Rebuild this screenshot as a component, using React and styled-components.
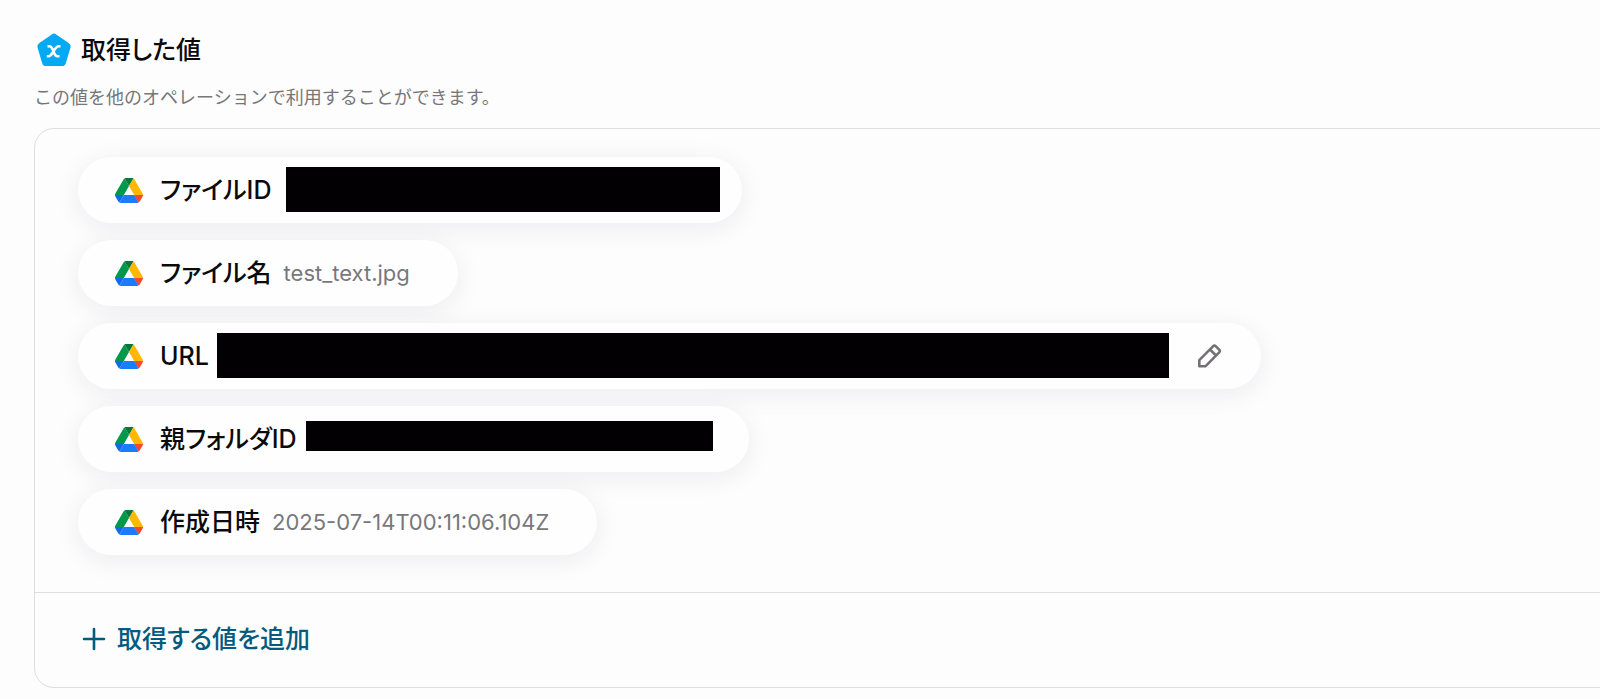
import React from "react";
import styled, { createGlobalStyle } from "styled-components";

const GlobalStyle = createGlobalStyle`
  * { box-sizing: border-box; }
  body {
    margin: 0;
    background: #fdfdfd;
    color: #0b0b0e;
    font-family: Inter, "Noto Sans CJK JP", sans-serif;
    font-feature-settings: "palt";
    overflow-x: hidden;
  }
`;

const Page = styled.main`
  padding: 32px 0 12px 34px;
`;

const Header = styled.header`
  display: flex;
  align-items: center;
  gap: 9px;
  padding-left: 2px;
`;

const Title = styled.h1`
  margin: 0;
  font-size: 25px;
  line-height: 36px;
  font-weight: 500;
`;

const Description = styled.p`
  margin: 16px 0;
  font-size: 18px;
  line-height: 28px;
  font-feature-settings: normal;
  color: #76767a;
`;

const Panel = styled.section`
  margin-right: -24px;
  border: 1px solid #dedde0;
  border-radius: 20px;
`;

const ValueList = styled.ul`
  display: flex;
  flex-direction: column;
  align-items: flex-start;
  gap: 17px;
  margin: 0;
  padding: 28px 43px 37px;
  list-style: none;
`;

const ValuePill = styled.li`
  display: flex;
  align-items: center;
  height: 66px;
  padding: 0 ${(p) => p.$end}px 0 37px;
  border-radius: 33px;
  background: #fefefe;
  box-shadow: 0 5px 26px rgba(50, 30, 60, 0.08);
`;

const Label = styled.span`
  margin-left: 17px;
  font-size: 25px;
  line-height: 36px;
  font-weight: 500;
  white-space: nowrap;
`;

const Value = styled.span`
  margin-left: 12px;
  font-size: 22px;
  line-height: 36px;
  color: #78787c;
  white-space: nowrap;
`;

const Redacted = styled.span`
  width: ${(p) => p.$width}px;
  height: ${(p) => p.$height}px;
  margin: 0 0 ${(p) => p.$below}px ${(p) => p.$gap}px;
  background: #020003;
`;

const EditButton = styled.button`
  display: flex;
  margin: 0 0 0 26px;
  padding: 0;
  border: 0;
  background: none;
  color: #747276;
  cursor: pointer;
`;

const Footer = styled.footer`
  border-top: 1px solid #dedde0;
  padding: 28px 46px 30px;
`;

const AddButton = styled.button`
  display: flex;
  align-items: center;
  gap: 10px;
  padding: 0;
  border: 0;
  background: none;
  color: #045b7e;
  font: inherit;
  font-feature-settings: inherit;
  font-size: 25px;
  line-height: 36px;
  font-weight: 500;
  cursor: pointer;
`;

const VariableIcon = () => (
  <svg width="36" height="36" viewBox="0 0 36 36" aria-hidden="true">
    <path
      d="M15.8 2.4Q18 .8 20.2 2.4L33 11.3Q35.2 13 34.5 15.6L29.8 31.2Q29 34 26.2 34H9.8Q7 34 6.200 31.200L1.500 15.600Q.8 13 3 11.300Z"
      fill="#04a9f4"
    />
    <g fill="none" stroke="#fff" strokeWidth="2.600" strokeLinecap="butt">
      <path d="M11.500 14.200H13.200C18.200 14.200 16.600 24.300 21.600 24.300H23.500" />
      <path d="M24.500 14.200H22.800C18.200 14.200 16.600 24.300 12.600 24.300H10.800" />
    </g>
  </svg>
);

const DriveIcon = () => (
  <svg width="28" height="25" viewBox="0 0 87.3 78" preserveAspectRatio="none" aria-hidden="true">
    <path d="m6.600 66.850 3.850 6.650c.8 1.400 1.950 2.500 3.300 3.300l13.750-23.800h-27.500c0 1.550.4 3.100 1.200 4.500z" fill="#0d6cec" />
    <path d="m43.650 25-13.750-23.800c-1.350.8-2.500 1.900-3.300 3.300l-25.400 44a9.060 9.060 0 0 0 -1.200 4.500h27.500z" fill="#00984a" />
    <path d="m73.550 76.800c1.350-.8 2.500-1.900 3.300-3.300l1.600-2.750 7.650-13.250c.8-1.400 1.200-2.950 1.200-4.500h-27.502l5.852 11.500z" fill="#f4482f" />
    <path d="m43.650 25 13.750-23.800c-1.350-.8-2.900-1.200-4.500-1.200h-18.500c-1.600 0-3.150.45-4.500 1.200z" fill="#087838" />
    <path d="m59.800 53h-32.300l-13.750 23.800c1.350.8 2.900 1.200 4.500 1.200h50.800c1.600 0 3.150-.45 4.500-1.200z" fill="#1a7cfa" />
    <path d="m73.400 26.500-12.700-22c-.8-1.400-1.950-2.500-3.300-3.300l-13.750 23.800 16.150 28h27.450c0-1.550-.4-3.100-1.200-4.500z" fill="#ffb800" />
  </svg>
);

const PencilIcon = () => (
  <svg width="28" height="28" viewBox="0 0 28 28" fill="none" stroke="currentColor" strokeWidth="2.600" strokeLinejoin="round" aria-hidden="true">
    <path d="M4.300 24.300V18.200L18 4.300Q19.400 3 20.800 4.300L24.200 7.700Q25.500 9 24.200 10.400L10.400 24.300Z" />
    <path d="M15 7.500L21 13.500" />
  </svg>
);

const PlusIcon = () => (
  <svg width="26" height="26" viewBox="0 0 26 26" fill="none" stroke="currentColor" strokeWidth="2.600" strokeLinecap="round" aria-hidden="true">
    <path d="M13 3V23M3 13H23" />
  </svg>
);

const values = [
  { label: "ファイルID", end: 22, redacted: { width: 434, height: 45, gap: 15, below: 2 } },
  { label: "ファイル名", end: 48, value: "test_text.jpg" },
  { label: "URL", end: 38, redacted: { width: 952, height: 45, gap: 8, below: 2 }, editable: true },
  { label: "親フォルダID", end: 36, redacted: { width: 407, height: 30, gap: 9, below: 6 } },
  { label: "作成日時", end: 48, value: "2025-07-14T00:11:06.104Z" },
];

export default function App() {
  return (
    <>
      <GlobalStyle />
      <Page>
        <Header>
          <VariableIcon />
          <Title>取得した値</Title>
        </Header>
        <Description>この値を他のオペレーションで利用することができます。</Description>
        <Panel>
          <ValueList>
            {values.map(({ label, value, end, redacted, editable }) => (
              <ValuePill key={label} $end={end}>
                <DriveIcon />
                <Label>{label}</Label>
                {value && <Value>{value}</Value>}
                {redacted && (
                  <Redacted
                    $width={redacted.width}
                    $height={redacted.height}
                    $gap={redacted.gap}
                    $below={redacted.below}
                  />
                )}
                {editable && (
                  <EditButton type="button" aria-label="URLを編集">
                    <PencilIcon />
                  </EditButton>
                )}
              </ValuePill>
            ))}
          </ValueList>
          <Footer>
            <AddButton type="button">
              <PlusIcon />
              取得する値を追加
            </AddButton>
          </Footer>
        </Panel>
      </Page>
    </>
  );
}
